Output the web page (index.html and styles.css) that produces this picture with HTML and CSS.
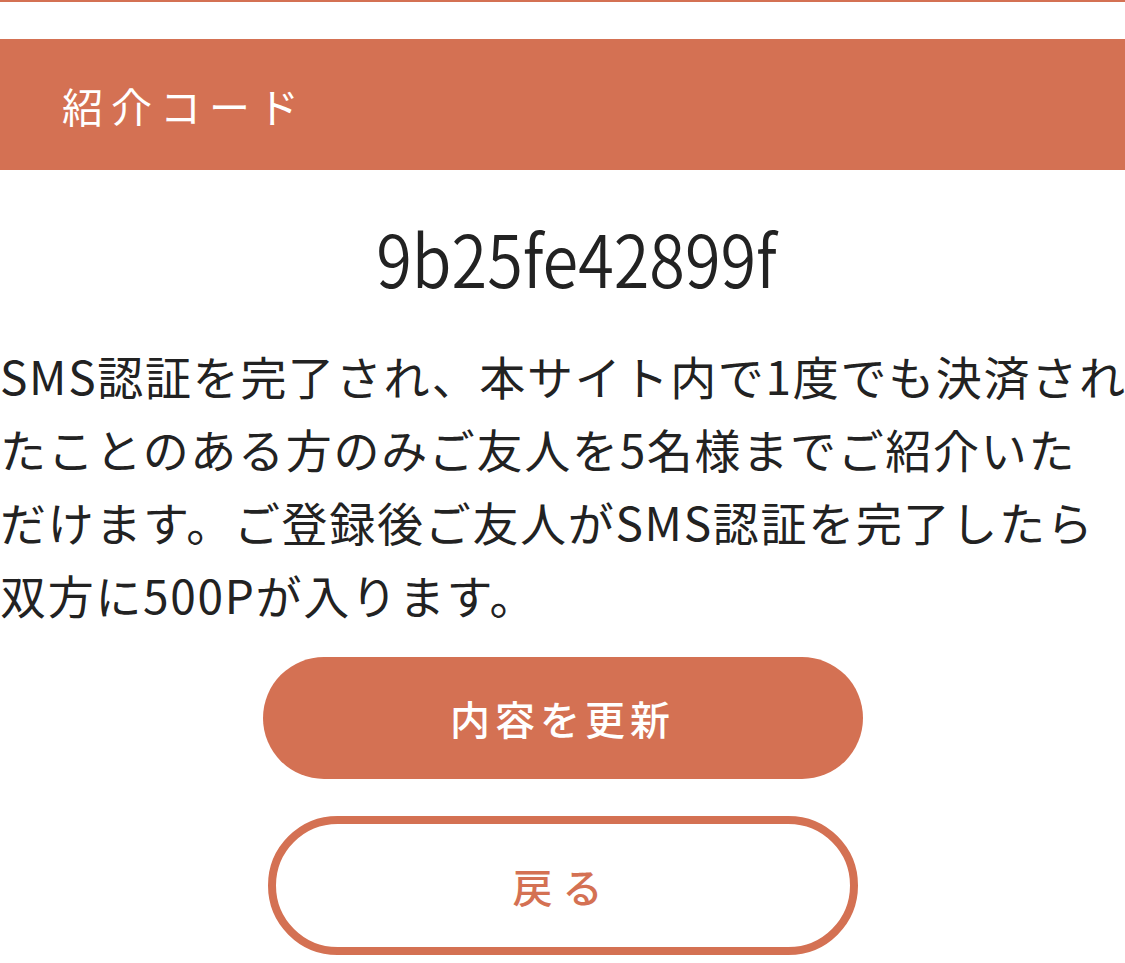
FILE: index.html
```html
<!DOCTYPE html>
<html lang="ja">
<head>
	<meta charset="utf-8">
	<title>紹介コード</title>
	<meta name="viewport" content="width=device-width, initial-scale=1">
	<link rel="stylesheet" href="styles.css">
</head>
<body>

<div class="topline"></div>

<div class="page-title">紹介コード</div>

<section class="invite">
	<div class="invite-code"><span class="code-text">9b25fe42899f</span></div>
	<p class="invite-note">
		<span class="line">SMS認証を完了され、本サイト内で1度でも決済され</span>
		<span class="line">たことのある方のみご友人を5名様までご紹介いた</span>
		<span class="line">だけます。ご登録後ご友人がSMS認証を完了したら</span>
		<span class="line">双方に500Pが入ります。</span>
	</p>
	<div class="actions">
		<button type="button" class="btn btn-primary">内容を更新</button>
		<button type="button" class="btn btn-outline">戻る</button>
	</div>
</section>

</body>
</html>
```

FILE: styles.css
```css
body {
	margin: 0;
	background: #fff;
	color: #222;
	font-family: "Noto Sans CJK JP", "Noto Sans", sans-serif;
	overflow-x: hidden;
}

.topline {
	height: 2px;
	background: #d47153;
}

.page-title {
	margin-top: 37px;
	height: 131px;
	display: flex;
	align-items: center;
	padding-left: 62px;
	background: #d47153;
	color: #fff;
	font-size: 41px;
	font-weight: 400;
	letter-spacing: 8px;
}

.invite-code {
	margin-top: 42px;
	padding-left: 28px;
	text-align: center;
	font-size: 72px;
	line-height: 90px;
	font-weight: 350;
	color: #222;
}

.code-text {
	display: inline-block;
	transform: scaleX(0.9);
}

.invite-note {
	margin: 37px 0 0;
	font-size: 46px;
	line-height: 73px;
	letter-spacing: 1.7px;
	color: #222;
}

.invite-note .line {
	display: block;
	white-space: nowrap;
}

.actions {
	margin-top: 26px;
	display: flex;
	flex-direction: column;
	align-items: center;
	gap: 37px;
}

.btn {
	box-sizing: border-box;
	border-radius: 999px;
	font-family: inherit;
	font-size: 40px;
	font-weight: 500;
	letter-spacing: 5px;
	cursor: pointer;
}

.btn-primary {
	width: 600px;
	height: 122px;
	border: 0;
	background: #d47153;
	color: #fff;
}

.btn-outline {
	width: 590px;
	height: 139px;
	border: 8px solid #d47153;
	background: #fff;
	color: #d47153;
	letter-spacing: 10px;
}
```
